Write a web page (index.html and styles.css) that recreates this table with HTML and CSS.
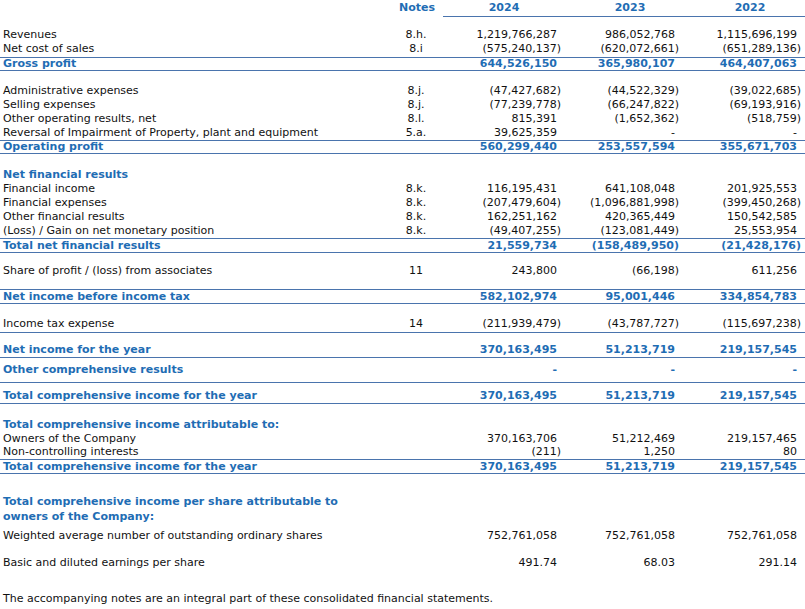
FILE: index.html
```html
<!DOCTYPE html>
<html>
<head>
  <meta charset="UTF-8">
  <title>Consolidated statement of comprehensive income</title>
  <link rel="stylesheet" href="styles.css">
</head>
<body>
  <table class="statement">
    <colgroup>
      <col class="col-label">
      <col class="col-notes">
      <col class="col-gap">
      <col class="col-y1">
      <col class="col-y2">
      <col class="col-y3">
    </colgroup>
    <thead>
      <tr class="head">
        <th></th>
        <th class="notes">Notes</th>
        <th></th>
        <th class="year">2024</th>
        <th class="year y-shift">2023</th>
        <th class="year y-shift">2022</th>
      </tr>
    </thead>
    <tbody>
      <tr class="gap" style="height:11px"><td colspan="6"></td></tr>
      <tr><td class="label">Revenues</td><td class="notes">8.h.</td><td></td><td class="num pos">1,219,766,287</td><td class="num pos">986,052,768</td><td class="num pos">1,115,696,199</td></tr>
      <tr class="pb1"><td class="label">Net cost of sales</td><td class="notes">8.i</td><td></td><td class="num">(575,240,137)</td><td class="num">(620,072,661)</td><td class="num">(651,289,136)</td></tr>
      <tr class="total lh12"><td class="label">Gross profit</td><td></td><td></td><td class="num pos">644,526,150</td><td class="num pos">365,980,107</td><td class="num pos">464,407,063</td></tr>

      <tr class="gap" style="height:13px"><td colspan="6"></td></tr>
      <tr><td class="label">Administrative expenses</td><td class="notes">8.j.</td><td></td><td class="num">(47,427,682)</td><td class="num">(44,522,329)</td><td class="num">(39,022,685)</td></tr>
      <tr><td class="label">Selling expenses</td><td class="notes">8.j.</td><td></td><td class="num">(77,239,778)</td><td class="num">(66,247,822)</td><td class="num">(69,193,916)</td></tr>
      <tr><td class="label">Other operating results, net</td><td class="notes">8.l.</td><td></td><td class="num pos">815,391</td><td class="num">(1,652,362)</td><td class="num">(518,759)</td></tr>
      <tr><td class="label">Reversal of Impairment of Property, plant and equipment</td><td class="notes">5.a.</td><td></td><td class="num pos">39,625,359</td><td class="num pos">-</td><td class="num pos">-</td></tr>
      <tr class="total lh12"><td class="label">Operating profit</td><td></td><td></td><td class="num pos">560,299,440</td><td class="num pos">253,557,594</td><td class="num pos">355,671,703</td></tr>

      <tr class="gap" style="height:14px"><td colspan="6"></td></tr>
      <tr class="heading"><td class="label" colspan="6">Net financial results</td></tr>
      <tr><td class="label">Financial income</td><td class="notes">8.k.</td><td></td><td class="num pos">116,195,431</td><td class="num pos">641,108,048</td><td class="num pos">201,925,553</td></tr>
      <tr><td class="label">Financial expenses</td><td class="notes">8.k.</td><td></td><td class="num">(207,479,604)</td><td class="num">(1,096,881,998)</td><td class="num">(399,450,268)</td></tr>
      <tr><td class="label">Other financial results</td><td class="notes">8.k.</td><td></td><td class="num pos">162,251,162</td><td class="num pos">420,365,449</td><td class="num pos">150,542,585</td></tr>
      <tr><td class="label">(Loss) / Gain on net monetary position</td><td class="notes">8.k.</td><td></td><td class="num">(49,407,255)</td><td class="num">(123,081,449)</td><td class="num pos">25,553,954</td></tr>
      <tr class="total lh13"><td class="label">Total net financial results</td><td></td><td></td><td class="num pos">21,559,734</td><td class="num">(158,489,950)</td><td class="num">(21,428,176)</td></tr>

      <tr class="gap" style="height:10px"><td colspan="6"></td></tr>
      <tr class="lh16"><td class="label">Share of profit / (loss) from associates</td><td class="notes">11</td><td></td><td class="num pos">243,800</td><td class="num">(66,198)</td><td class="num pos">611,256</td></tr>
      <tr class="gap" style="height:10px"><td colspan="6"></td></tr>
      <tr class="total lh13"><td class="label">Net income before income tax</td><td></td><td></td><td class="num pos">582,102,974</td><td class="num pos">95,001,446</td><td class="num pos">334,854,783</td></tr>

      <tr class="gap" style="height:12px"><td colspan="6"></td></tr>
      <tr class="lh16 rule"><td class="label">Income tax expense</td><td class="notes">14</td><td></td><td class="num">(211,939,479)</td><td class="num">(43,787,727)</td><td class="num">(115,697,238)</td></tr>
      <tr class="total-open pt10"><td class="label">Net income for the year</td><td></td><td></td><td class="num pos">370,163,495</td><td class="num pos">51,213,719</td><td class="num pos">219,157,545</td></tr>
      <tr class="total-open pt5 pb5"><td class="label">Other comprehensive results</td><td></td><td></td><td class="num pos">-</td><td class="num pos">-</td><td class="num pos">-</td></tr>
      <tr class="total-open pt6"><td class="label">Total comprehensive income for the year</td><td></td><td></td><td class="num pos">370,163,495</td><td class="num pos">51,213,719</td><td class="num pos">219,157,545</td></tr>

      <tr class="gap" style="height:14px"><td colspan="6"></td></tr>
      <tr class="heading"><td class="label" colspan="6">Total comprehensive income attributable to:</td></tr>
      <tr class="lh13"><td class="label">Owners of the Company</td><td></td><td></td><td class="num pos">370,163,706</td><td class="num pos">51,212,469</td><td class="num pos">219,157,465</td></tr>
      <tr><td class="label">Non-controlling interests</td><td></td><td></td><td class="num">(211)</td><td class="num pos">1,250</td><td class="num pos">80</td></tr>
      <tr class="total lh13"><td class="label">Total comprehensive income for the year</td><td></td><td></td><td class="num pos">370,163,495</td><td class="num pos">51,213,719</td><td class="num pos">219,157,545</td></tr>

      <tr class="gap" style="height:20px"><td colspan="6"></td></tr>
      <tr class="heading lh15"><td class="label" colspan="6">Total comprehensive income per share attributable to<br>owners of the Company:</td></tr>
      <tr class="gap" style="height:5px"><td colspan="6"></td></tr>
      <tr><td class="label">Weighted average number of outstanding ordinary shares</td><td></td><td></td><td class="num pos">752,761,058</td><td class="num pos">752,761,058</td><td class="num pos">752,761,058</td></tr>
      <tr class="gap" style="height:13px"><td colspan="6"></td></tr>
      <tr><td class="label">Basic and diluted earnings per share</td><td></td><td></td><td class="num pos">491.74</td><td class="num pos">68.03</td><td class="num pos">291.14</td></tr>
    </tbody>
  </table>
  <p class="footnote">The accompanying notes are an integral part of these consolidated financial statements.</p>
</body>
</html>
```

FILE: styles.css
```css
body {
  margin: 0;
  padding-top: 1px;
  background-color: #ffffff;
  color: #111111;
  font-family: "DejaVu Sans", Verdana, sans-serif;
  font-size: 11px;
}

.statement {
  width: 805px;
  table-layout: fixed;
  border-collapse: separate;
  border-spacing: 0;
}

.col-label { width: 395px; }
.col-notes { width: 42px; }
.col-gap { width: 6px; }
.col-y1 { width: 122px; }
.col-y2 { width: 118px; }
.col-y3 { width: 122px; }

.statement th,
.statement td {
  padding: 0;
  line-height: 14px;
  white-space: nowrap;
  vertical-align: top;
}

.statement .gap td {
  line-height: 0;
}

/* header */
.head th {
  color: #1f6db4;
  font-weight: bold;
  padding-bottom: 1px;
}

.head .notes {
  padding-left: 2px;
}

.head .year {
  text-align: center;
  border-bottom: 1px solid #4a74ad;
}

.head .y-shift {
  padding-left: 12px;
}

.label {
  padding-left: 3px !important;
}

.notes {
  text-align: center;
}

.num {
  text-align: right;
  padding-right: 4px !important;
}

.num.pos {
  padding-right: 8px !important;
}

/* row variants */
.pb1 td { padding-bottom: 1px; }
.lh12 td { line-height: 12px; }
.lh13 td { line-height: 13px; }
.lh15 td { line-height: 15px; }
.lh16 td { line-height: 16px; }
.pt5 td { padding-top: 5px; }
.pt6 td { padding-top: 6px; }
.pt10 td { padding-top: 10px; }
.pb5 td { padding-bottom: 5px; }

.heading td,
.total td,
.total-open td {
  color: #1f6db4;
  font-weight: bold;
}

.total td {
  border-top: 1px solid #4a74ad;
  border-bottom: 1px solid #4a74ad;
}

.total-open td,
.rule td {
  border-bottom: 1px solid #4a74ad;
}

.footnote {
  margin: 22px 0 0;
  padding-left: 3px;
  line-height: 14px;
}
```
